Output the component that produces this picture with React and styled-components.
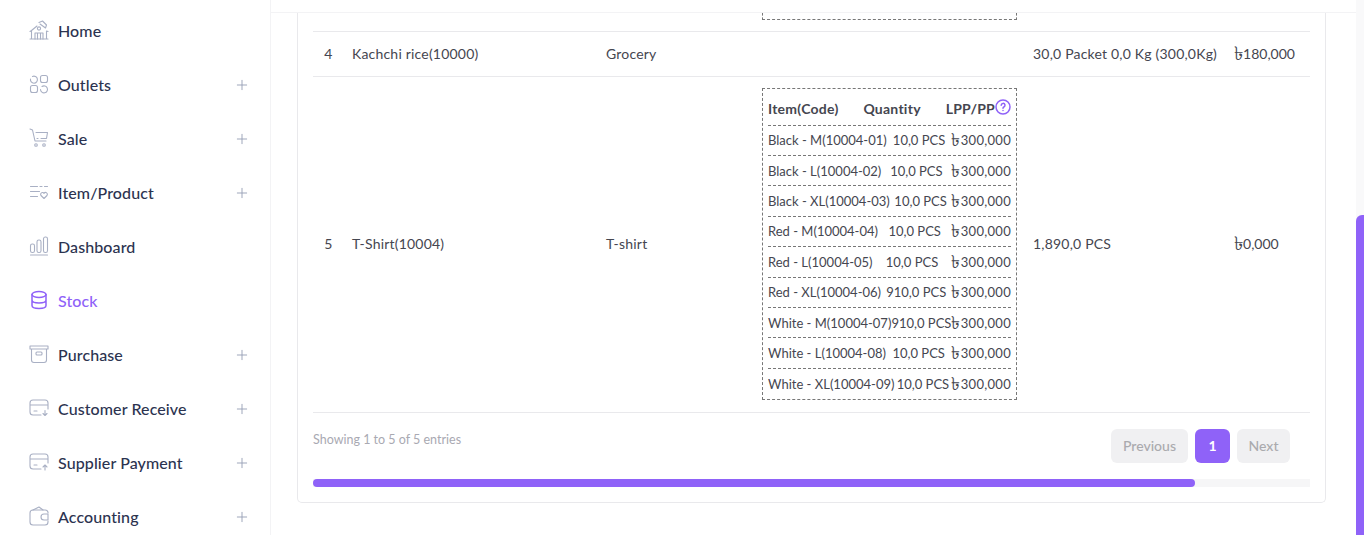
import React from "react";
import styled, { createGlobalStyle } from "styled-components";
import { Plus } from "lucide-react";

const GlobalStyle = createGlobalStyle`
  html, body {
    margin: 0;
    padding: 0;
    height: 100%;
    overflow: hidden;
    background: #fff;
    font-family: "Lato", "Noto Sans", "DejaVu Sans", sans-serif;
  }
`;

const Page = styled.div`
  display: flex;
  width: 1364px;
  height: 535px;
  overflow: hidden;
`;

const Sidebar = styled.nav`
  flex: 0 0 271px;
  box-sizing: border-box;
  padding-top: 3px;
  border-right: 1px solid #f3f3f5;
`;

const NavItem = styled.div`
  display: flex;
  align-items: center;
  gap: 9px;
  height: 54px;
  padding: 0 20px 0 29px;
  font-size: 16px;
  font-weight: 500;
  letter-spacing: 0.1px;
  color: ${(p) => (p.$active ? "#8f62f8" : "#2c3350")};
`;

const NavIcon = styled.svg`
  flex: 0 0 20px;
  width: 20px;
  height: 20px;
  fill: none;
  stroke: ${(p) => (p.$active ? "#8f62f8" : "#a9b0c4")};
  stroke-width: ${(p) => (p.$active ? 1.5 : 1.1)};
  stroke-linecap: round;
  stroke-linejoin: round;
`;

const NavLabel = styled.span`
  flex: 1;
`;

const Expand = styled(Plus)`
  width: 16px;
  height: 16px;
  margin-top: 2px;
  color: #98a0b6;
  stroke-width: 1.4;
`;

const Main = styled.main`
  flex: 1;
  display: flex;
  flex-direction: column;
  min-width: 0;
`;

const TopBand = styled.div`
  flex: 0 0 13px;
  box-sizing: border-box;
  border-bottom: 1px solid #f3f3f5;
`;

const Card = styled.section`
  box-sizing: border-box;
  width: 1029px;
  margin-left: 26px;
  padding: 0 15px 15px;
  border: 1px solid #e9e9ec;
  border-top: none;
  border-radius: 0 0 5px 5px;
`;

const Table = styled.table`
  width: 997px;
  table-layout: fixed;
  border-collapse: collapse;
  font-size: 14px;
  letter-spacing: 0.2px;
  color: #454650;
`;

const Row = styled.tr`
  border-bottom: 1px solid #e9e9ec;
`;

const Cell = styled.td`
  height: ${(p) => p.$h || "auto"};
  padding: 0 8px 2px;
  vertical-align: middle;
  white-space: nowrap;
  text-align: ${(p) => (p.$center ? "center" : "left")};
`;

const StubCell = styled.td`
  height: 18px;
  padding: 0 8px;
  vertical-align: top;
`;

const StubBox = styled.div`
  height: 6px;
  border: 1px dashed #777;
  border-top: none;
`;

const DetailBox = styled.div`
  margin: 11px 0 10px;
  padding: 0 5px;
  border: 1px dashed #777;
  letter-spacing: 0;
`;

const DetailRow = styled.div`
  display: flex;
  justify-content: space-between;
  align-items: center;
  box-sizing: border-box;
  height: ${(p) => (p.$head ? "36.6px" : "30.4px")};
  padding-top: ${(p) => (p.$head ? "4px" : "0")};
  font-size: ${(p) => (p.$head ? "14px" : "13px")};
  font-weight: ${(p) => (p.$head ? 700 : 400)};
  letter-spacing: ${(p) => (p.$head ? "0.25px" : "0")};
  border-bottom: ${(p) => (p.$last ? "none" : "1px dashed #777")};
`;

const Price = styled.span`
  letter-spacing: ${(p) => (p.$wide ? "0.3px" : "0")};
`;

const Taka = styled.span`
  font-size: 1.35em;
  line-height: 0;
  vertical-align: -0.5px;
`;

const Lpp = styled.span`
  display: inline-flex;
  align-items: center;
`;

const HelpIcon = styled.svg`
  width: 16px;
  height: 16px;
  margin-top: -4px;
  fill: none;
  stroke: #8f62f8;
  stroke-width: 1.5;
  stroke-linecap: round;
`;

const TableFooter = styled.div`
  display: flex;
  justify-content: space-between;
  align-items: flex-start;
  height: 66px;
  padding: 16px 20px 0 0;
  box-sizing: border-box;
`;

const Info = styled.div`
  margin-top: 1px;
  font-size: 12.5px;
  line-height: 20px;
  color: #a9a9b2;
`;

const Pager = styled.div`
  display: flex;
  gap: 7px;
`;

const PageButton = styled.button`
  height: 34px;
  width: ${(p) => p.$w}px;
  padding: 0 0 2px;
  border: none;
  border-radius: 6px;
  font-family: inherit;
  font-size: 14px;
  font-weight: ${(p) => (p.$active ? 700 : 500)};
  color: ${(p) => (p.$active ? "#fff" : "#aaaaae")};
  background: ${(p) => (p.$active ? "#8f62f8" : "#f0f0f2")};
`;

const HScroll = styled.div`
  height: 8px;
  background: #f6f6f7;
`;

const HThumb = styled.div`
  width: 882px;
  height: 100%;
  border-radius: 4px;
  background: #8f62f8;
`;

const VScroll = styled.div`
  flex: 0 0 8px;
  box-sizing: border-box;
  padding-top: 215px;
  background: #f9f9fa;
`;

const VThumb = styled.div`
  height: 320px;
  border-radius: 6px 0 0 0;
  background: #8f62f8;
`;

const icons = {
  home: (
    <>
      <path d="M1 19h18M2.500 19v-8.500L1 11.500M2.500 10.500 8 6M17.500 19v-8l1.500 .5M10 2.500 13.500 1l4 4-1 3-5.500-4" />
      <circle cx="10" cy="8.500" r="1.600" />
      <path d="M6 19v-6h8v6M8.500 19v-6M11.500 19v-6" />
    </>
  ),
  outlets: (
    <>
      <path d="M3.500 2.500a3.500 3.500 0 1 1-2 2.500" />
      <rect x="11.500" y="1.500" width="7" height="7" rx="2" />
      <rect x="1.500" y="11.500" width="7" height="7" rx="2" />
      <path d="M13 12.500a3.500 3.500 0 1 1 -1.500 3" />
    </>
  ),
  sale: (
    <>
      <path d="M1 1l2.500 1 2.500 11h11" />
      <path d="M7 4.500h11.500l-1 6H12M8 10.500h1" />
      <circle cx="7" cy="17" r="1.300" />
      <circle cx="15" cy="17" r="1.300" />
    </>
  ),
  item: (
    <>
      <path d="M1.500 4.500h7M11 4.500h2M15.500 4.500h3M1.500 9.500h9M1.500 14.500h7" />
      <path d="M15 16.500l-3-3a1.800 1.800 0 0 1 3-2.200 1.800 1.800 0 0 1 3 2.200z" />
    </>
  ),
  dashboard: (
    <>
      <path d="M1.500 19h17" />
      <rect x="1.500" y="8" width="4" height="8.500" rx="1.800" />
      <rect x="8" y="4" width="4" height="12.500" rx="1.800" />
      <rect x="14.500" y="1" width="4" height="15.500" rx="1.800" />
    </>
  ),
  stock: (
    <>
      <ellipse cx="10" cy="4.500" rx="7" ry="3" />
      <path d="M3 4.500v11c0 1.700 3.100 3 7 3s7-1.300 7-3v-11M3 10c0 1.700 3.100 3 7 3s7-1.300 7-3" />
    </>
  ),
  purchase: (
    <>
      <path d="M1 2h18v3H1zM2.500 5v11a2.500 2.500 0 0 0 2.500 2.500h10a2.500 2.500 0 0 0 2.500-2.500V5" />
      <rect x="7" y="8" width="6" height="3" rx="1" />
    </>
  ),
  receive: (
    <>
      <path d="M12 17H4a3 3 0 0 1-3-3V5a3 3 0 0 1 3-3h12a3 3 0 0 1 3 3v6M1 7h18M5 13h3" />
      <path d="M16 12.500v5M14 15.500l2 2 2-2" />
    </>
  ),
  payment: (
    <>
      <path d="M12 17H4a3 3 0 0 1-3-3V5a3 3 0 0 1 3-3h12a3 3 0 0 1 3 3v6M1 7h18M5 13h3" />
      <path d="M16 18v-5M14 15l2-2 2 2" />
    </>
  ),
  accounting: (
    <>
      <path d="M19 7V6a3 3 0 0 0-3-2H4a3 3 0 0 0-3 3v9a3 3 0 0 0 3 3h12a3 3 0 0 0 3-3v-1" />
      <path d="M4 4l6-3 4 3M19 8h-4a2.500 2.500 0 0 0 0 6h4z" />
    </>
  ),
};

const menu = [
  { key: "home", label: "Home" },
  { key: "outlets", label: "Outlets", more: true },
  { key: "sale", label: "Sale", more: true },
  { key: "item", label: "Item/Product", more: true },
  { key: "dashboard", label: "Dashboard" },
  { key: "stock", label: "Stock", active: true },
  { key: "purchase", label: "Purchase", more: true },
  { key: "receive", label: "Customer Receive", more: true },
  { key: "payment", label: "Supplier Payment", more: true },
  { key: "accounting", label: "Accounting", more: true },
];

const variants = [
  ["Black - M(10004-01)", "10,0 PCS"],
  ["Black - L(10004-02)", "10,0 PCS"],
  ["Black - XL(10004-03)", "10,0 PCS"],
  ["Red - M(10004-04)", "10,0 PCS"],
  ["Red - L(10004-05)", "10,0 PCS"],
  ["Red - XL(10004-06)", "910,0 PCS"],
  ["White - M(10004-07)", "910,0 PCS"],
  ["White - L(10004-08)", "10,0 PCS"],
  ["White - XL(10004-09)", "10,0 PCS"],
];

export default function App() {
  return (
    <Page>
      <GlobalStyle />
      <Sidebar>
        {menu.map((m) => (
          <NavItem key={m.key} $active={m.active}>
            <NavIcon viewBox="0 0 20 20" $active={m.active}>
              {icons[m.key]}
            </NavIcon>
            <NavLabel>{m.label}</NavLabel>
            {m.more && <Expand />}
          </NavItem>
        ))}
      </Sidebar>
      <Main>
        <TopBand />
        <Card>
          <Table>
            <colgroup>
              <col width="31" />
              <col width="254" />
              <col width="156" />
              <col width="271" />
              <col width="201" />
              <col width="84" />
            </colgroup>
            <tbody>
              <Row>
                <StubCell colSpan={3} />
                <StubCell>
                  <StubBox />
                </StubCell>
                <StubCell colSpan={2} />
              </Row>
              <Row>
                <Cell $center $h="42px">4</Cell>
                <Cell>Kachchi rice(10000)</Cell>
                <Cell>Grocery</Cell>
                <Cell />
                <Cell>30,0 Packet 0,0 Kg (300,0Kg)</Cell>
                <Cell><Price><Taka>৳</Taka>180,000</Price></Cell>
              </Row>
              <Row>
                <Cell $center>5</Cell>
                <Cell>T-Shirt(10004)</Cell>
                <Cell>T-shirt</Cell>
                <Cell>
                  <DetailBox>
                    <DetailRow $head>
                      <span>Item(Code)</span>
                      <span>Quantity</span>
                      <Lpp>
                        LPP/PP
                        <HelpIcon viewBox="0 0 16 16">
                          <circle cx="8" cy="8" r="7" />
                          <path d="M6.200 6.200a1.900 1.900 0 1 1 2.700 1.800c-.6.300-.9.700-.9 1.300M8 11.500v.1" />
                        </HelpIcon>
                      </Lpp>
                    </DetailRow>
                    {variants.map(([name, qty], i) => (
                      <DetailRow key={name} $last={i === variants.length - 1}>
                        <span>{name}</span>
                        <span>{qty}</span>
                        <Price $wide><Taka>৳</Taka>300,000</Price>
                      </DetailRow>
                    ))}
                  </DetailBox>
                </Cell>
                <Cell>1,890,0 PCS</Cell>
                <Cell><Price><Taka>৳</Taka>0,000</Price></Cell>
              </Row>
            </tbody>
          </Table>
          <TableFooter>
            <Info>Showing 1 to 5 of 5 entries</Info>
            <Pager>
              <PageButton $w={77}>Previous</PageButton>
              <PageButton $w={35} $active>1</PageButton>
              <PageButton $w={53}>Next</PageButton>
            </Pager>
          </TableFooter>
          <HScroll>
            <HThumb />
          </HScroll>
        </Card>
      </Main>
      <VScroll>
        <VThumb />
      </VScroll>
    </Page>
  );
}
